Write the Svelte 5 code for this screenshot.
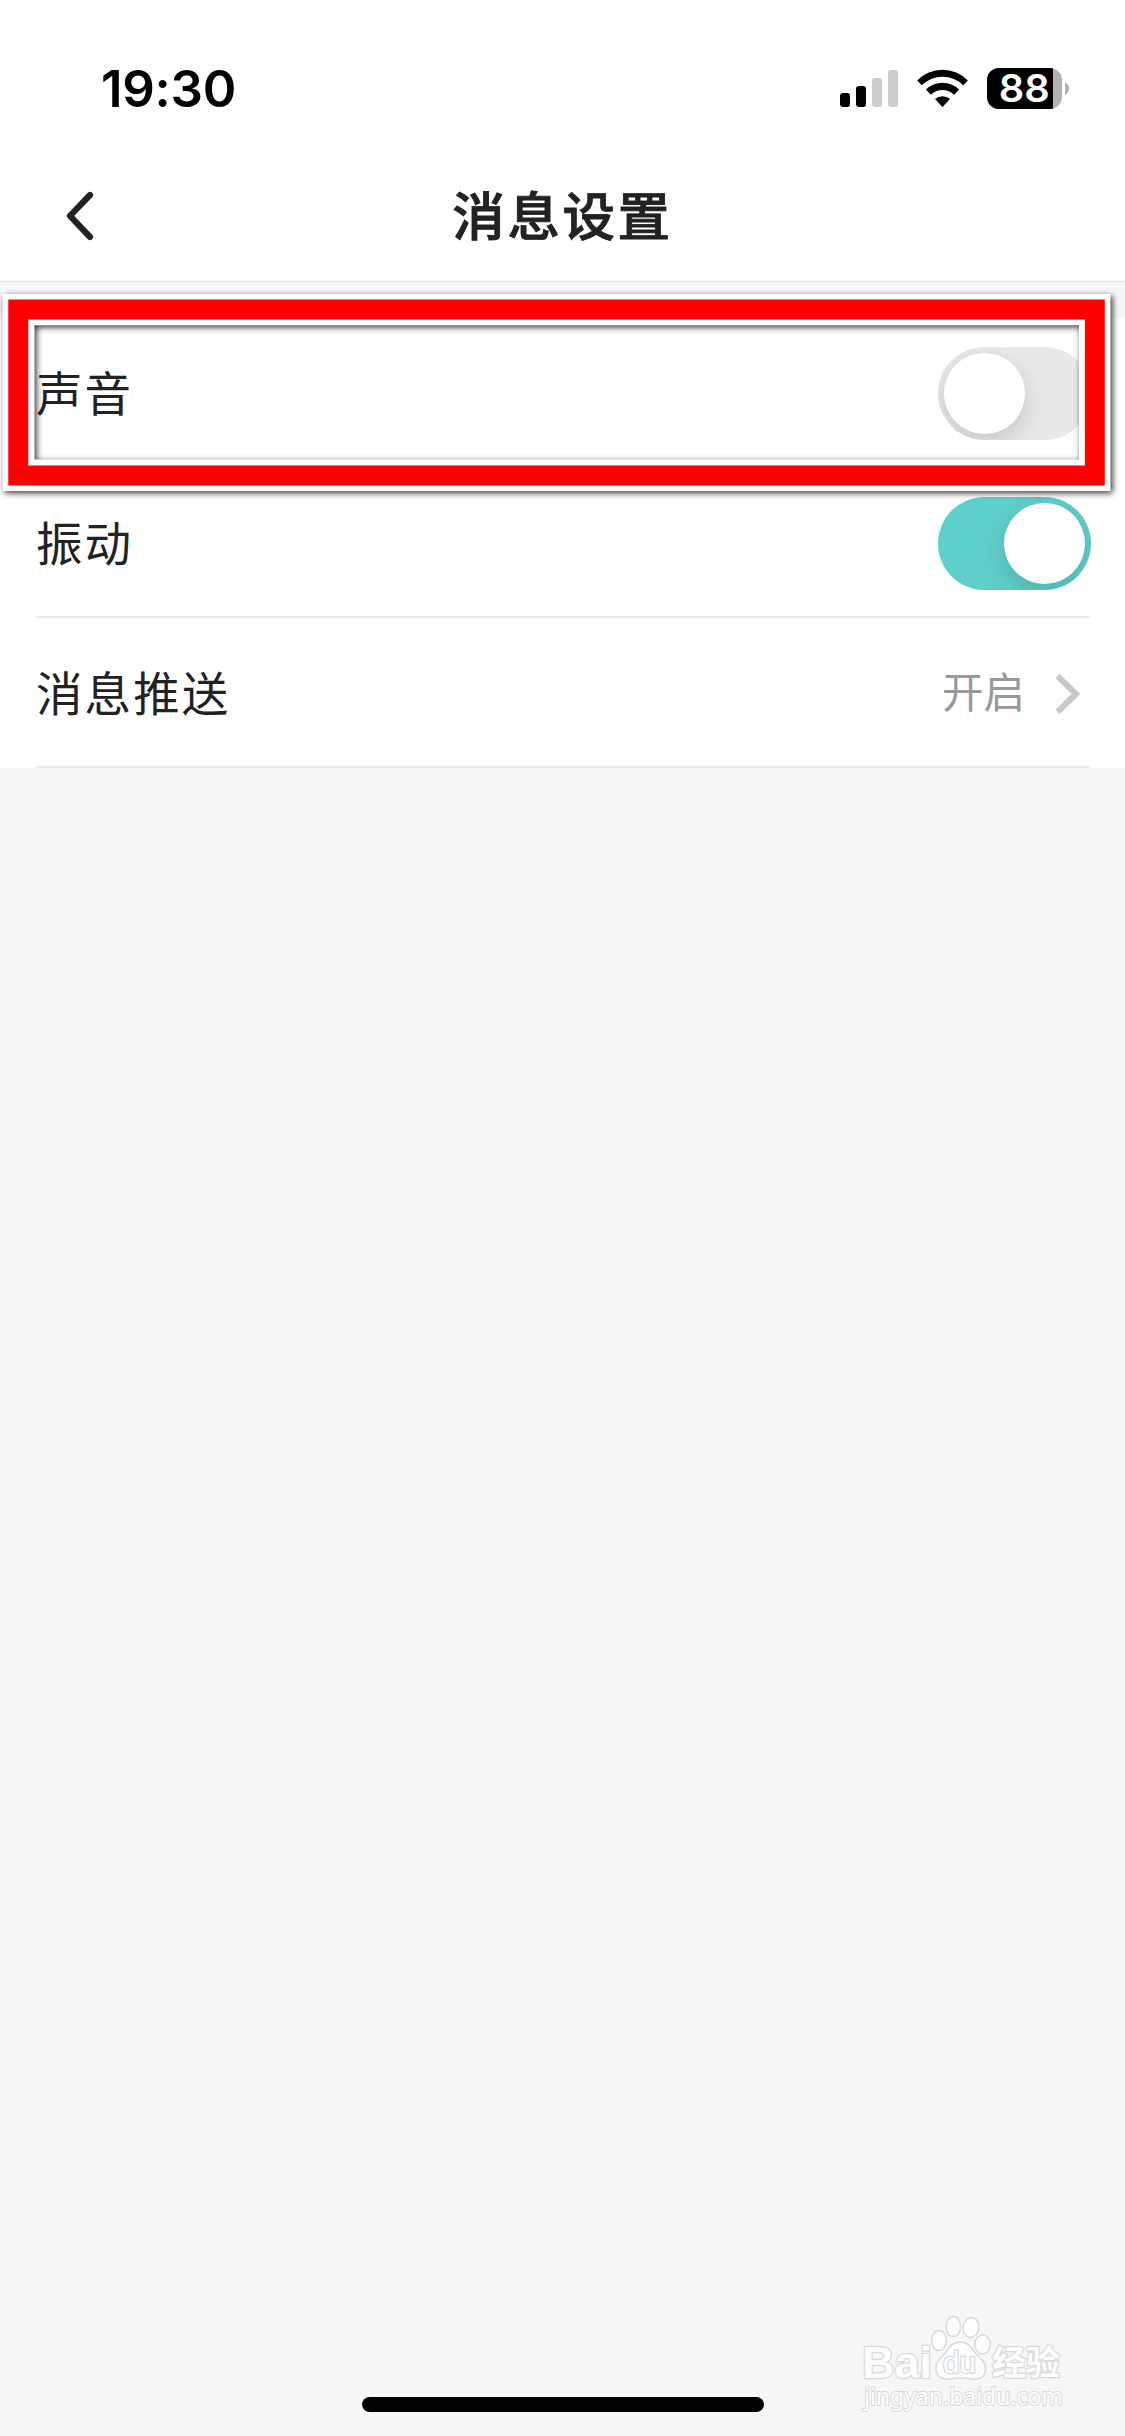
<script lang="ts">
	type Row = { label: string; kind: 'switch' | 'link'; on?: boolean; value?: string };

	let rows: Row[] = $state([
		{ label: '声音', kind: 'switch', on: false },
		{ label: '振动', kind: 'switch', on: true },
		{ label: '消息推送', kind: 'link', value: '开启' },
	]);
</script>

<div class="screen">
	<!-- Status bar -->
	<div class="status-bar">
		<span class="time">19:30</span>
		<svg class="status-icons" width="230" height="42" viewBox="0 0 230 42" aria-hidden="true">
			<rect x="0" y="25" width="10" height="14" rx="3" />
			<rect x="16" y="18" width="10" height="21" rx="3" />
			<rect x="32" y="10" width="10" height="29" rx="3" fill="#ccc" />
			<rect x="48" y="2" width="10" height="37" rx="3" fill="#ccc" />
			<path d="M77.2 12.4 A35.5 35.5 0 0 1 127.8 12.4 L123.3 17.3 A29.5 29.5 0 0 0 81.7 17.3 Z" />
			<path d="M86 21.6 A23.5 23.5 0 0 1 119 21.6 L114.2 26.8 A16.8 16.8 0 0 0 90.8 26.8 Z" />
			<path d="M95 31 A11.5 11.5 0 0 1 110 31 L102.5 39 Z" />
			<clipPath id="battery"><rect x="147" y="0" width="75" height="41" rx="12" /></clipPath>
			<g clip-path="url(#battery)">
				<rect x="147" width="75" height="41" fill="#b3b3b3" />
				<rect x="147" width="66" height="41" />
			</g>
			<path d="M225 14.3 Q229.2 16.5 229.2 20.6 T225 27 Z" fill="#b3b3b3" />
			<text class="battery-level" x="184.3" y="34.3" text-anchor="middle" textLength="51" lengthAdjust="spacingAndGlyphs">88</text>
		</svg>
	</div>

	<!-- Nav bar -->
	<header class="nav-bar">
		<button class="back" aria-label="返回">
			<svg width="28" height="50" viewBox="0 0 28 50">
				<path d="M24 4 L4 24.8 L24 46" fill="none" stroke="#222" stroke-width="6.2" stroke-linecap="round" stroke-linejoin="round" />
			</svg>
		</button>
		<h1>消息设置</h1>
	</header>

	<main class="settings">
		{#each rows as row}
			<div class="row">
				<span class="label">{row.label}</span>
				{#if row.kind === 'switch'}
					<button
						class="switch"
						class:on={row.on}
						role="switch"
						aria-checked={row.on}
						aria-label={row.label}
						onclick={() => (row.on = !row.on)}
					>
						<span class="knob"></span>
					</button>
				{:else}
					<span class="value">{row.value}</span>
					<svg class="chevron" width="26" height="42" viewBox="0 0 26 42">
						<path d="M2.5 3 L21 21 L2.5 39" fill="none" stroke="#c7c7cc" stroke-width="6" />
					</svg>
				{/if}
			</div>
		{/each}
	</main>

	<!-- Highlight around the sound row -->
	<svg class="highlight" width="1125" height="220" viewBox="0 285 1125 220" aria-hidden="true">
		<path fill="#fff" fill-rule="evenodd" d="M2.8 294 H1110.5 V491 H2.8 Z M34.5 325.3 V459.5 H1079 V325.3 Z" />
		<path fill="#f00" fill-rule="evenodd" d="M8.3 299.4 H1104.8 V485.6 H8.3 Z M28.3 319.4 V465.6 H1084.8 V319.4 Z" />
	</svg>

	<svg class="watermark" width="220" height="110" viewBox="0 0 220 110" aria-hidden="true">
		<g fill="#fdfdfd" stroke="#d9d9d9" stroke-width="1.5">
			<text class="brand" x="7" y="67.5" textLength="70" lengthAdjust="spacingAndGlyphs">Bai</text>
			<ellipse cx="84" cy="30.5" rx="7.5" ry="10" />
			<ellipse cx="98.3" cy="16.5" rx="7.3" ry="10" />
			<ellipse cx="116" cy="17.5" rx="8" ry="10" transform="rotate(8 116 17.5)" />
			<ellipse cx="127.5" cy="34.5" rx="7.8" ry="9.5" />
			<path d="M105.5 32 C114 32 117 39 121 44 C126 49 131 52 130.5 60 C130 68 123 70 116 69 C108 67.5 101 68 95 69 C87 70.5 81 67 81 58 C81 50 87 48 91 42 C95 36 98 32 105.5 32 Z" />
			<text class="du" x="88" y="63" textLength="33" lengthAdjust="spacingAndGlyphs">du</text>
			<text class="cn" x="137" y="65" textLength="68" lengthAdjust="spacingAndGlyphs">经验</text>
			<text class="url" x="9" y="94.5" textLength="199" lengthAdjust="spacingAndGlyphs">jingyan.baidu.com</text>
		</g>
	</svg>

	<div class="home-indicator"></div>
</div>

<style>
	:global(body) {
		background: #f7f7f7;
	}
	.screen {
		position: relative;
		display: flex;
		flex-direction: column;
		box-sizing: border-box;
		width: 1125px;
		height: 2436px;
		overflow: hidden;
		background: #f7f7f7;
		color: #222;
		font-family: 'Noto Sans CJK SC', sans-serif;
	}
	button {
		padding: 0;
		border: 0;
		background: none;
	}

	/* Status bar */
	.status-bar {
		display: flex;
		justify-content: space-between;
		align-items: center;
		height: 132px;
		padding: 46px 55px 0 101px;
		box-sizing: border-box;
		background: #fff;
	}
	.time {
		margin-top: -1px;
		color: #000;
		font: 600 51px/1 Inter, sans-serif;
		letter-spacing: -0.3px;
	}
	.status-icons {
		overflow: visible;
	}
	.battery-level {
		fill: #fff;
		font: 600 38px Inter, sans-serif;
	}

	/* Nav bar */
	.nav-bar {
		display: grid;
		grid-template-columns: 160px 1fr 160px;
		align-items: center;
		height: 150px;
		padding-top: 14px;
		box-sizing: border-box;
		border-bottom: 1px solid #e6e6e6;
		background: #fff;
	}
	.back {
		display: flex;
		padding: 4px 0 0 65.5px;
	}
	h1 {
		margin: 0;
		font-size: 52.5px;
		font-weight: 500;
		line-height: 1;
		letter-spacing: 2.6px;
		text-align: center;
		-webkit-text-stroke: 0.9px #222;
	}

	/* Setting rows */
	.settings {
		margin-top: 36px;
		padding: 0 36px;
		background: #fff;
	}
	.row {
		display: flex;
		align-items: center;
		height: 150px;
		box-sizing: border-box;
		border-bottom: 2px solid #e8e8e8;
	}
	.label {
		flex: 1;
		padding-bottom: 2px;
		font-size: 46.5px;
		line-height: 1;
		letter-spacing: 2.1px;
	}
	.switch {
		width: 153px;
		height: 93px;
		margin: 2px -2px 0 0;
		padding: 6px;
		border-radius: 47px;
		background: #e8e8e8;
		overflow: hidden;
	}
	.switch.on {
		background: #5fcfcb;
	}
	.knob {
		display: block;
		width: 81px;
		height: 81px;
		border-radius: 50%;
		background: #fff;
		box-shadow: 0 9px 24px rgba(0, 0, 0, 0.15);
	}
	.on .knob {
		margin-left: 60px;
	}
	.value {
		margin-right: 30px;
		padding-bottom: 2px;
		color: #999;
		font-size: 41.5px;
		font-weight: 400;
		line-height: 1;
	}
	.chevron {
		margin: 4px 8px 0 0;
	}

	/* Overlays */
	.highlight {
		position: absolute;
		top: 285px;
		left: 0;
		filter: drop-shadow(2px 2px 3px rgba(0, 0, 0, 0.8));
	}
	.watermark {
		position: absolute;
		top: 2310px;
		left: 855px;
	}
	.watermark text {
		paint-order: stroke;
		stroke-width: 2.5px;
	}
	.brand {
		font: 700 45px 'Liberation Sans', sans-serif;
	}
	.du {
		font: 400 29px 'Liberation Sans', sans-serif;
	}
	.cn {
		font: 700 34px 'Noto Sans CJK SC', sans-serif;
	}
	.watermark .url {
		font: 400 23px 'Noto Sans', sans-serif;
		stroke-width: 2px;
	}
	.home-indicator {
		width: 402px;
		height: 15px;
		margin: auto auto 24px;
		border-radius: 8px;
		background: #000;
	}
</style>
